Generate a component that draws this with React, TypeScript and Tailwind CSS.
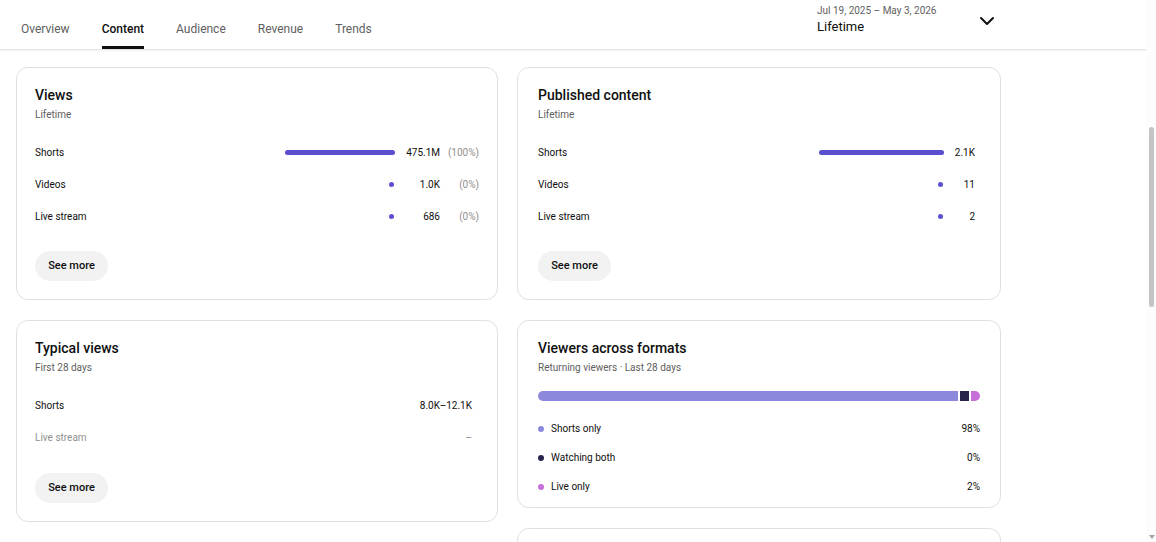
import React from "react";
import { ChevronDown } from "lucide-react";

const tabs = ["Overview", "Content", "Audience", "Revenue", "Trends"];

const SeeMore = () => (
  <button className="h-[30px] w-[73px] rounded-full bg-[#f2f2f2] text-[11px] font-medium text-[#0f0f0f]">
    See more
  </button>
);

const CardTitle = ({ title, sub }: { title: string; sub: string }) => (
  <div>
    <h2 className="text-[14px] leading-[18px] font-medium text-[#0f0f0f]">{title}</h2>
    <p className="mt-[4px] text-[10px] leading-[14px] text-[#606060]">{sub}</p>
  </div>
);

const viewRows = [
  { label: "Shorts", value: "475.1M", pct: "(100%)", bar: true },
  { label: "Videos", value: "1.0K", pct: "(0%)", bar: false },
  { label: "Live stream", value: "686", pct: "(0%)", bar: false },
];

const publishedRows = [
  { label: "Shorts", value: "2.1K", bar: true },
  { label: "Videos", value: "11", bar: false },
  { label: "Live stream", value: "2", bar: false },
];

const legend = [
  { label: "Shorts only", value: "98%", color: "bg-[#8c88dc]" },
  { label: "Watching both", value: "0%", color: "bg-[#25234a]" },
  { label: "Live only", value: "2%", color: "bg-[#c76fd8]" },
];

const App = () => {
  return (
    <div className="flex h-[542px] w-[1156px] overflow-hidden bg-white font-['Roboto',sans-serif]">
      <div className="flex w-[1146px] flex-col">
        {/* header */}
        <div className="flex h-[50px] shrink-0 items-stretch justify-between border-b border-[#e5e5e5] shadow-[0_1px_2px_rgba(0,0,0,0.06)]">
          <div className="flex items-stretch gap-8 pl-[21px]">
            {tabs.map((t) => (
              <div
                key={t}
                className={
                  t === "Content"
                    ? "flex items-center border-b-[3px] border-[#0f0f0f] pt-[12px] text-[12px] font-medium text-[#0f0f0f]"
                    : "flex items-center border-b-[3px] border-transparent pt-[12px] text-[12px] text-[#606060]"
                }
              >
                {t}
              </div>
            ))}
          </div>
          <div className="mr-[147px] flex items-start pt-[4px]">
            <div className="w-[158px]">
              <div className="text-[10px] leading-[13px] text-[#606060]">Jul 19, 2025 – May 3, 2026</div>
              <div className="mt-[2px] text-[13px] leading-[16px] text-[#0f0f0f]">Lifetime</div>
            </div>
            <ChevronDown className="mt-[5px] text-[#0f0f0f]" size={24} strokeWidth={2} />
          </div>
        </div>

        {/* cards */}
        <div className="flex gap-[19px] pl-4 pt-[17px]">
          <div className="flex w-[482px] shrink-0 flex-col gap-5">
            <div className="shrink-0 rounded-xl border border-[#e0e0e0] px-[18px] pt-[18px] pb-[18px]">
              <CardTitle title="Views" sub="Lifetime" />
              <div className="mt-[14px]">
                {viewRows.map((r) => (
                  <div key={r.label} className="flex h-8 items-center text-[10px] text-[#0f0f0f]">
                    <span className="flex-1">{r.label}</span>
                    <div className="flex w-[110px] justify-end">
                      {r.bar ? (
                        <div className="h-[5px] w-[110px] rounded-full bg-[#5a4fcf]" />
                      ) : (
                        <div className="mr-[1px] h-[5px] w-[5px] rounded-full bg-[#5a4fcf]" />
                      )}
                    </div>
                    <span className="w-[45px] text-right">{r.value}</span>
                    <span className="w-[39px] text-right text-[#909090]">{r.pct}</span>
                  </div>
                ))}
              </div>
              <div className="mt-[19px]">
                <SeeMore />
              </div>
            </div>

            <div className="shrink-0 rounded-xl border border-[#e0e0e0] pl-[18px] pr-[25px] pt-[18px] pb-[18px]">
              <CardTitle title="Typical views" sub="First 28 days" />
              <div className="mt-[14px]">
                <div className="flex h-8 items-center justify-between text-[10px] text-[#0f0f0f]">
                  <span>Shorts</span>
                  <span>8.0K–12.1K</span>
                </div>
                <div className="flex h-8 items-center justify-between text-[10px] text-[#909090]">
                  <span>Live stream</span>
                  <span>–</span>
                </div>
              </div>
              <div className="mt-[20px]">
                <SeeMore />
              </div>
            </div>

            <div className="ml-[6px] h-[60px] w-[470px] shrink-0 rounded-xl border border-[#e0e0e0]" />
          </div>

          <div className="flex w-[484px] shrink-0 flex-col gap-5">
            <div className="shrink-0 rounded-xl border border-[#e0e0e0] pl-[20px] pr-[25px] pt-[18px] pb-[18px]">
              <CardTitle title="Published content" sub="Lifetime" />
              <div className="mt-[14px]">
                {publishedRows.map((r) => (
                  <div key={r.label} className="flex h-8 items-center text-[10px] text-[#0f0f0f]">
                    <span className="flex-1">{r.label}</span>
                    <div className="flex w-[125px] justify-end">
                      {r.bar ? (
                        <div className="h-[5px] w-[125px] rounded-full bg-[#5a4fcf]" />
                      ) : (
                        <div className="mr-[1px] h-[5px] w-[5px] rounded-full bg-[#5a4fcf]" />
                      )}
                    </div>
                    <span className="w-[31px] text-right">{r.value}</span>
                  </div>
                ))}
              </div>
              <div className="mt-[19px]">
                <SeeMore />
              </div>
            </div>

            <div className="shrink-0 rounded-xl border border-[#e0e0e0] px-[20px] pt-[18px] pb-[6px]">
              <CardTitle title="Viewers across formats" sub="Returning viewers · Last 28 days" />
              <div className="mt-[16px] flex h-[10px] gap-[2px]">
                <div className="flex-1 rounded-l-full bg-[#8c88dc]" />
                <div className="w-[9px] bg-[#25234a]" />
                <div className="w-[9px] rounded-r-full bg-[#c76fd8]" />
              </div>
              <div className="mt-[13px]">
                {legend.map((l) => (
                  <div key={l.label} className="flex h-[29px] items-center text-[10px] text-[#0f0f0f]">
                    <span className={`mr-[7px] h-[6px] w-[6px] rounded-full ${l.color}`} />
                    <span className="flex-1">{l.label}</span>
                    <span>{l.value}</span>
                  </div>
                ))}
              </div>
            </div>

            <div className="h-[60px] shrink-0 rounded-xl border border-[#e0e0e0]" />
          </div>
        </div>
      </div>

      {/* scrollbar */}
      <div className="relative w-[10px] bg-[#fdfdfd]">
        <div className="ml-[3px] mt-[127px] h-[180px] w-[5px] rounded-full bg-[#c4c4c4]" />
        <div className="absolute bottom-[3px] left-[3px] h-0 w-0 border-x-[3px] border-t-[4px] border-x-transparent border-t-[#a3a3a3]" />
      </div>
    </div>
  );
};

export default App;
